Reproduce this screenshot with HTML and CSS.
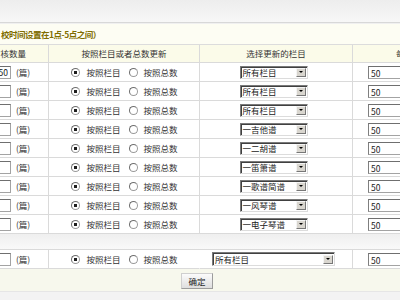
FILE: index.html
```html
<!DOCTYPE html>
<html lang="zh-CN">
<head>
<meta charset="utf-8">
<title>采集设置</title>
<link rel="stylesheet" href="styles.css">
</head>
<body>
<div class="topbar"></div>
<div class="notice">校时间设置在1点-5点之间）</div>
<table class="grid">
  <colgroup><col class="c1"><col class="c2"><col class="c3"><col class="c4"></colgroup>
  <thead>
    <tr><th>审核数量</th><th>按照栏目或者总数更新</th><th>选择更新的栏目</th><th>每次更新数量</th></tr>
  </thead>
  <tbody>
    <tr>
      <td><div class="cnt"><input class="num filled" value="50"><span>(篇)</span></div></td>
      <td><div class="mode"><label><input type="radio" name="m1" checked>按照栏目</label><label><input type="radio" name="m1">按照总数</label></div></td>
      <td class="cat"><span class="sel"><span class="val">所有栏目</span><span class="btn"></span></span></td>
      <td><div class="per"><input class="amt" value="50"></div></td>
    </tr>
    <tr>
      <td><div class="cnt"><input class="num" value=""><span>(篇)</span></div></td>
      <td><div class="mode"><label><input type="radio" name="m2" checked>按照栏目</label><label><input type="radio" name="m2">按照总数</label></div></td>
      <td class="cat"><span class="sel"><span class="val">所有栏目</span><span class="btn"></span></span></td>
      <td><div class="per"><input class="amt" value="50"></div></td>
    </tr>
    <tr>
      <td><div class="cnt"><input class="num" value=""><span>(篇)</span></div></td>
      <td><div class="mode"><label><input type="radio" name="m3" checked>按照栏目</label><label><input type="radio" name="m3">按照总数</label></div></td>
      <td class="cat"><span class="sel"><span class="val">所有栏目</span><span class="btn"></span></span></td>
      <td><div class="per"><input class="amt" value="50"></div></td>
    </tr>
    <tr>
      <td><div class="cnt"><input class="num" value=""><span>(篇)</span></div></td>
      <td><div class="mode"><label><input type="radio" name="m4" checked>按照栏目</label><label><input type="radio" name="m4">按照总数</label></div></td>
      <td class="cat"><span class="sel"><span class="val">一吉他谱</span><span class="btn"></span></span></td>
      <td><div class="per"><input class="amt" value="50"></div></td>
    </tr>
    <tr>
      <td><div class="cnt"><input class="num" value=""><span>(篇)</span></div></td>
      <td><div class="mode"><label><input type="radio" name="m5" checked>按照栏目</label><label><input type="radio" name="m5">按照总数</label></div></td>
      <td class="cat"><span class="sel"><span class="val">一二胡谱</span><span class="btn"></span></span></td>
      <td><div class="per"><input class="amt" value="50"></div></td>
    </tr>
    <tr>
      <td><div class="cnt"><input class="num" value=""><span>(篇)</span></div></td>
      <td><div class="mode"><label><input type="radio" name="m6" checked>按照栏目</label><label><input type="radio" name="m6">按照总数</label></div></td>
      <td class="cat"><span class="sel"><span class="val">一笛箫谱</span><span class="btn"></span></span></td>
      <td><div class="per"><input class="amt" value="50"></div></td>
    </tr>
    <tr>
      <td><div class="cnt"><input class="num" value=""><span>(篇)</span></div></td>
      <td><div class="mode"><label><input type="radio" name="m7" checked>按照栏目</label><label><input type="radio" name="m7">按照总数</label></div></td>
      <td class="cat"><span class="sel"><span class="val">一歌谱简谱</span><span class="btn"></span></span></td>
      <td><div class="per"><input class="amt" value="50"></div></td>
    </tr>
    <tr>
      <td><div class="cnt"><input class="num" value=""><span>(篇)</span></div></td>
      <td><div class="mode"><label><input type="radio" name="m8" checked>按照栏目</label><label><input type="radio" name="m8">按照总数</label></div></td>
      <td class="cat"><span class="sel"><span class="val">一风琴谱</span><span class="btn"></span></span></td>
      <td><div class="per"><input class="amt" value="50"></div></td>
    </tr>
    <tr>
      <td><div class="cnt"><input class="num" value=""><span>(篇)</span></div></td>
      <td><div class="mode"><label><input type="radio" name="m9" checked>按照栏目</label><label><input type="radio" name="m9">按照总数</label></div></td>
      <td class="cat"><span class="sel"><span class="val">一电子琴谱</span><span class="btn"></span></span></td>
      <td><div class="per"><input class="amt" value="50"></div></td>
    </tr>
    <tr><td class="gap" colspan="4"></td></tr>
    <tr class="last">
      <td><div class="cnt"><input class="num" value=""><span>(篇)</span></div></td>
      <td class="nob"><div class="mode"><label><input type="radio" name="m10" checked>按照栏目</label><label><input type="radio" name="m10">按照总数</label></div></td>
      <td class="cat"><span class="sel wide"><span class="val">所有栏目</span><span class="btn"></span></span></td>
      <td><div class="per"><input class="amt" value="50"></div></td>
    </tr>
  </tbody>
</table>
<div class="actions"><button class="ok" type="button">确定</button></div>
<div class="footer"></div>
</body>
</html>
```

FILE: styles.css
```css
html, body {
  margin: 0;
  overflow: hidden;
}
body {
  width: 400px;
  height: 300px;
  background: #fff;
  color: #333;
  font-family: "Noto Sans CJK SC", "Noto Sans", sans-serif;
  font-size: 8.5px;
  line-height: 1;
}
.topbar {
  height: 22px;
  background: linear-gradient(#ededed, #f7f7f7);
  border-bottom: 1px solid #d8d8d8;
}
.notice {
  height: 20px;
  line-height: 20px;
  padding-left: 1px;
  background: #fdfdf3;
  border-top: 1px solid #f0f0f0;
  border-bottom: 1px solid #dcdcdc;
  color: #806d00;
  font-weight: bold;
  letter-spacing: -0.5px;
  white-space: nowrap;
}
.grid {
  margin-left: -30px;
  width: 521px;
  table-layout: fixed;
  border-collapse: separate;
  border-spacing: 0;
}
.c1 { width: 79px; }
.c2 { width: 151px; }
.c3 { width: 153px; }
.c4 { width: 138px; }
.grid th, .grid td {
  padding: 0;
  border-right: 1px solid #dadada;
  border-bottom: 1px solid #dadada;
  white-space: nowrap;
  overflow: hidden;
}
.grid th {
  height: 17px;
  background: #fbfbe9;
  font-weight: normal;
  text-align: center;
  color: #333;
}
.grid td {
  height: 18px;
}
.grid td.gap {
  height: 15px;
  border-right: 0;
  background: linear-gradient(#efefef, #f9f9f9);
}
.grid td.nob {
  border-right-color: transparent;
}
.cnt {
  display: flex;
  align-items: center;
  gap: 5px;
  padding-left: 11px;
}
.num, .amt {
  box-sizing: border-box;
  height: 13px;
  margin: 0;
  padding: 0 2px;
  border: 1px solid #a3a3a3;
  border-top-color: #6f6f6f;
  border-left-color: #7f7f7f;
  background: #fff;
  font: inherit;
  color: #222;
}
.num { width: 30px; }
.num.filled { text-align: right; }
.mode {
  display: flex;
  justify-content: center;
  align-items: center;
  gap: 8px;
  padding-left: 1px;
}
.mode label {
  display: flex;
  align-items: center;
  gap: 6px;
}
.mode input {
  appearance: none;
  -webkit-appearance: none;
  box-sizing: border-box;
  width: 9px;
  height: 9px;
  margin: 0;
  border-radius: 50%;
  border: 1px solid #9a9a9a;
  border-top-color: #6e6e6e;
  border-left-color: #6e6e6e;
  background: #fff;
}
.mode input:checked {
  background: radial-gradient(circle, #1e1e1e 0 1.5px, #fff 2px);
}
.cat {
  text-align: center;
  padding-right: 5px !important;
}
.sel {
  display: inline-flex;
  align-items: center;
  vertical-align: middle;
  box-sizing: border-box;
  width: 68px;
  height: 13px;
  border: 1px solid #dcdcdc;
  border-top-color: #7a7a7a;
  border-left-color: #7a7a7a;
  box-shadow: inset 1px 1px 0 #404040;
  background: #fff;
  text-align: left;
}
.sel.wide {
  width: 123px;
  height: 14px;
}
.val {
  padding-left: 2px;
  color: #222;
}
.btn {
  position: relative;
  box-sizing: border-box;
  width: 10px;
  height: 9px;
  margin-left: auto;
  margin-right: 1px;
  background: #d9d6cf;
  border: 1px solid #f4f4f4;
  border-right-color: #777;
  border-bottom-color: #777;
}
.btn::after {
  content: "";
  position: absolute;
  left: 2px;
  top: 2px;
  border-left: 2px solid transparent;
  border-right: 2px solid transparent;
  border-top: 2px solid #000;
}
.per {
  padding-left: 15px;
  padding-top: 1px;
}
.amt { width: 60px; }
.actions {
  display: flex;
  justify-content: center;
  box-sizing: border-box;
  height: 23px;
  padding: 4px 6px 0 0;
  background: #f7f8ed;
  border-bottom: 1px solid #e6e6e6;
}
.ok {
  box-sizing: border-box;
  width: 32px;
  height: 16px;
  margin: 0;
  padding: 0;
  font: inherit;
  color: #222;
  background: linear-gradient(#fbfbfb, #dedede);
  border: 1px solid #cfcfcf;
  border-right-color: #9c9c9c;
  border-bottom-color: #9c9c9c;
}
.footer {
  height: 10px;
  background: #f3f3f3;
}
```
